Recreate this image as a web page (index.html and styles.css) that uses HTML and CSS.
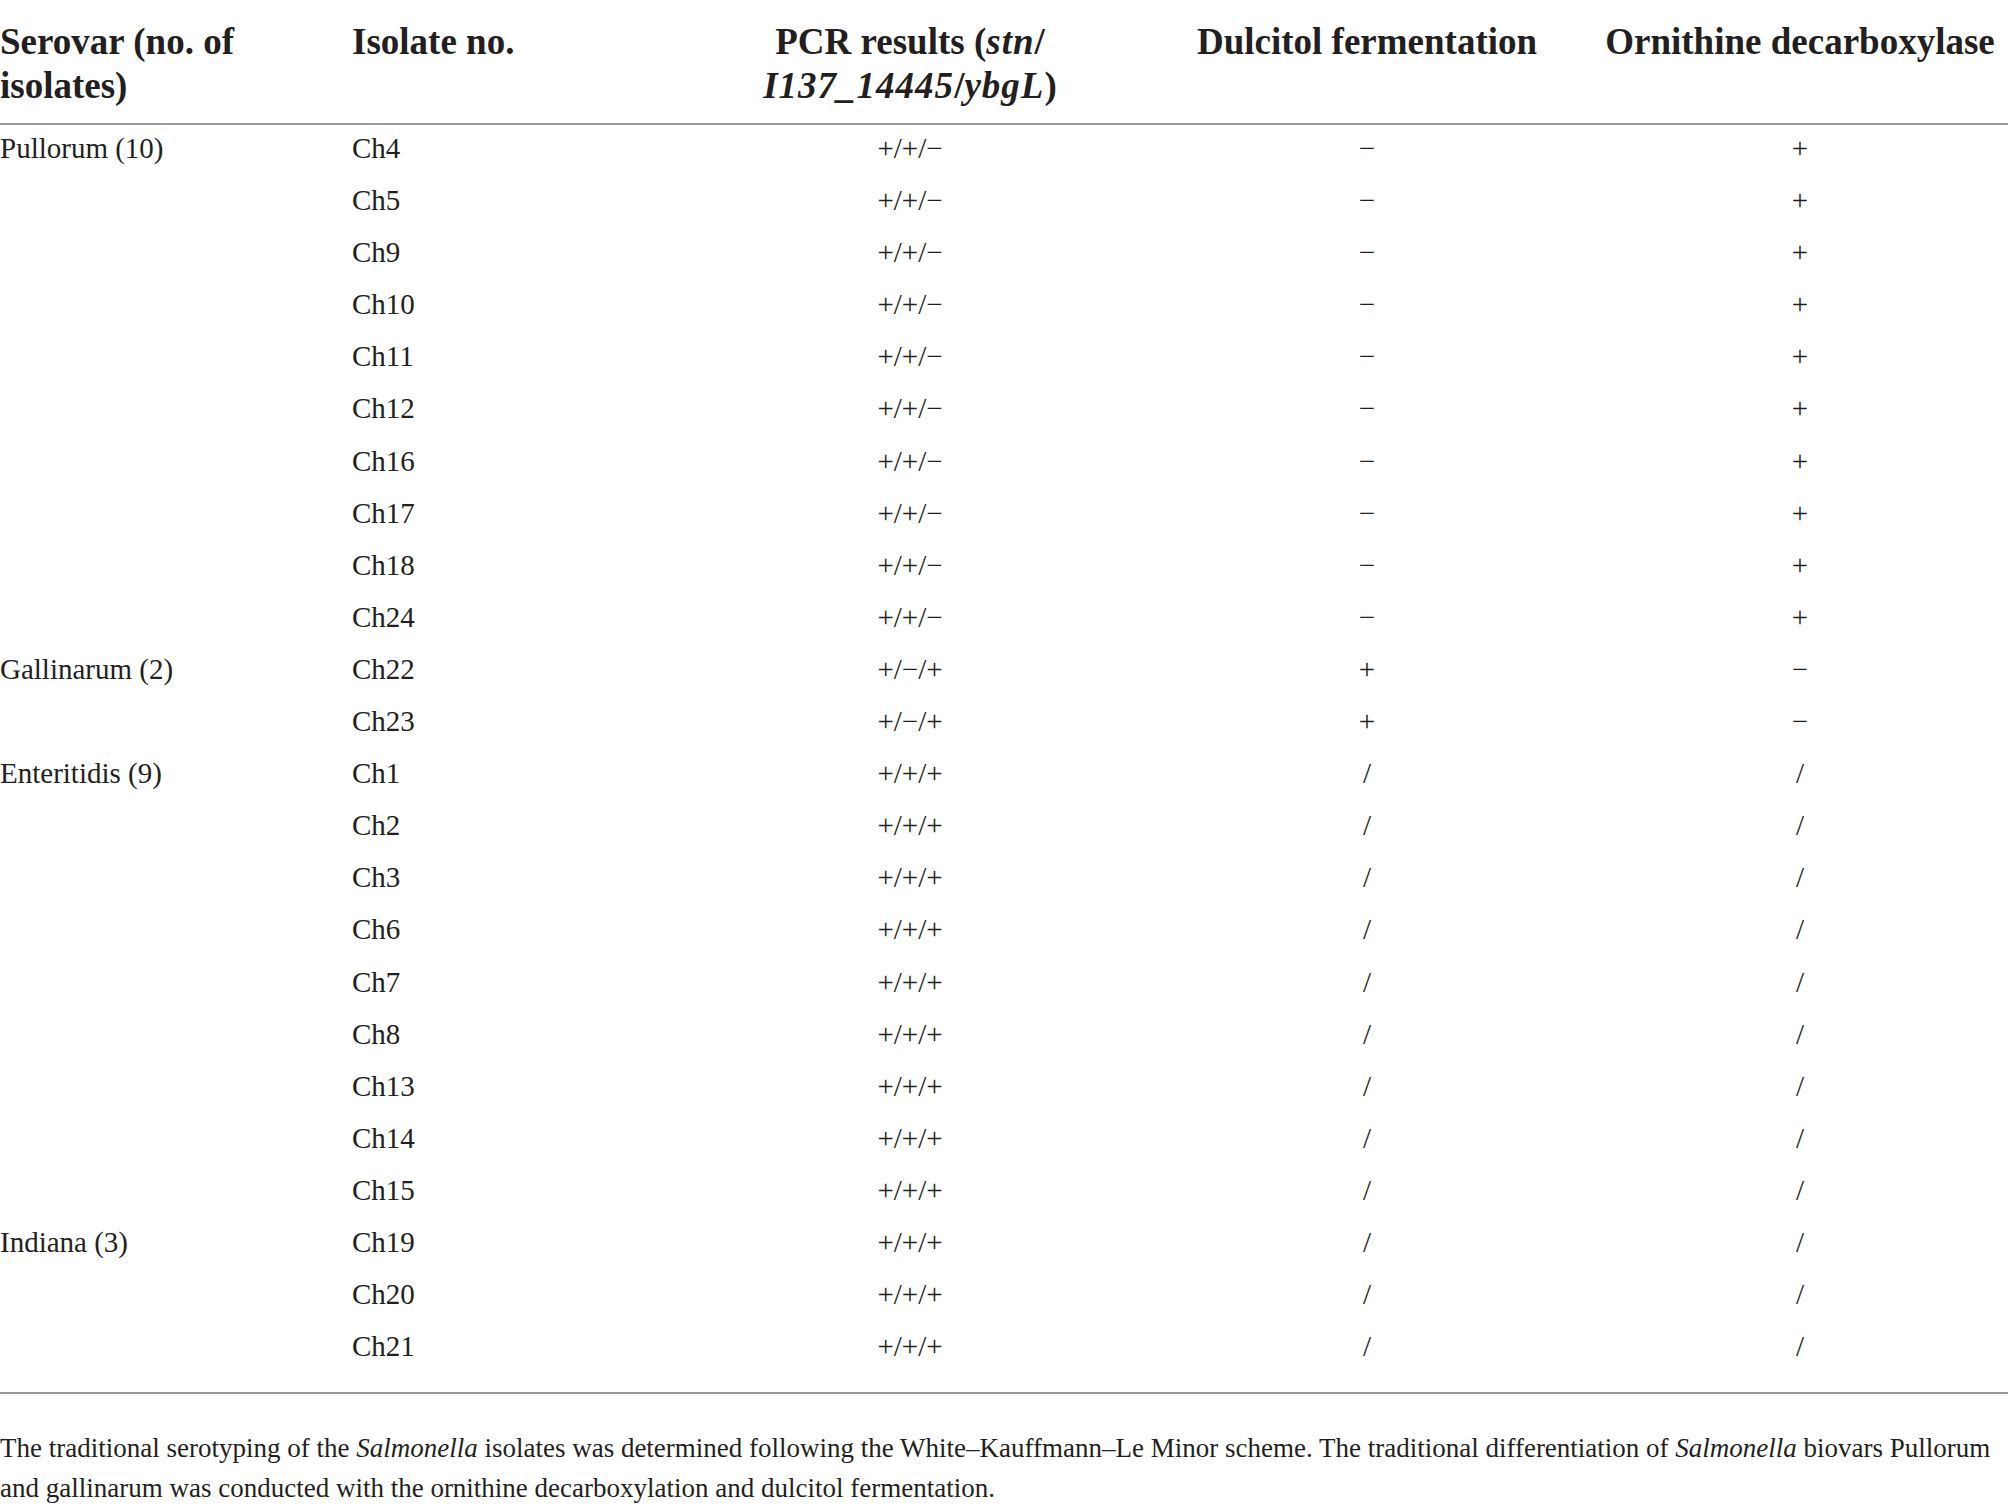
FILE: index.html
```html
<!DOCTYPE html>
<html lang="en">
<head>
<meta charset="utf-8">
<title>Salmonella isolates</title>
<link rel="stylesheet" href="styles.css">
</head>
<body>
<div class="page">
<table class="data">
  <colgroup>
    <col class="c1"><col class="c2"><col class="c3"><col class="c4"><col class="c5">
  </colgroup>
  <thead>
    <tr>
      <th class="left">Serovar (no. of<br>isolates)</th>
      <th class="left">Isolate no.</th>
      <th>PCR results (<i class="it">stn</i>/<br><i class="it">I137_14445</i>/<i class="it">ybgL</i>)</th>
      <th>Dulcitol fermentation</th>
      <th>Ornithine decarboxylase</th>
    </tr>
  </thead>
  <tbody>
    <tr class="first"><td class="left">Pullorum (10)</td><td class="left">Ch4</td><td>+/+/−</td><td>−</td><td>+</td></tr>
    <tr><td class="left"></td><td class="left">Ch5</td><td>+/+/−</td><td>−</td><td>+</td></tr>
    <tr><td class="left"></td><td class="left">Ch9</td><td>+/+/−</td><td>−</td><td>+</td></tr>
    <tr><td class="left"></td><td class="left">Ch10</td><td>+/+/−</td><td>−</td><td>+</td></tr>
    <tr><td class="left"></td><td class="left">Ch11</td><td>+/+/−</td><td>−</td><td>+</td></tr>
    <tr><td class="left"></td><td class="left">Ch12</td><td>+/+/−</td><td>−</td><td>+</td></tr>
    <tr><td class="left"></td><td class="left">Ch16</td><td>+/+/−</td><td>−</td><td>+</td></tr>
    <tr><td class="left"></td><td class="left">Ch17</td><td>+/+/−</td><td>−</td><td>+</td></tr>
    <tr><td class="left"></td><td class="left">Ch18</td><td>+/+/−</td><td>−</td><td>+</td></tr>
    <tr><td class="left"></td><td class="left">Ch24</td><td>+/+/−</td><td>−</td><td>+</td></tr>
    <tr><td class="left">Gallinarum (2)</td><td class="left">Ch22</td><td>+/−/+</td><td>+</td><td>−</td></tr>
    <tr><td class="left"></td><td class="left">Ch23</td><td>+/−/+</td><td>+</td><td>−</td></tr>
    <tr><td class="left">Enteritidis (9)</td><td class="left">Ch1</td><td>+/+/+</td><td>/</td><td>/</td></tr>
    <tr><td class="left"></td><td class="left">Ch2</td><td>+/+/+</td><td>/</td><td>/</td></tr>
    <tr><td class="left"></td><td class="left">Ch3</td><td>+/+/+</td><td>/</td><td>/</td></tr>
    <tr><td class="left"></td><td class="left">Ch6</td><td>+/+/+</td><td>/</td><td>/</td></tr>
    <tr><td class="left"></td><td class="left">Ch7</td><td>+/+/+</td><td>/</td><td>/</td></tr>
    <tr><td class="left"></td><td class="left">Ch8</td><td>+/+/+</td><td>/</td><td>/</td></tr>
    <tr><td class="left"></td><td class="left">Ch13</td><td>+/+/+</td><td>/</td><td>/</td></tr>
    <tr><td class="left"></td><td class="left">Ch14</td><td>+/+/+</td><td>/</td><td>/</td></tr>
    <tr><td class="left"></td><td class="left">Ch15</td><td>+/+/+</td><td>/</td><td>/</td></tr>
    <tr><td class="left">Indiana (3)</td><td class="left">Ch19</td><td>+/+/+</td><td>/</td><td>/</td></tr>
    <tr><td class="left"></td><td class="left">Ch20</td><td>+/+/+</td><td>/</td><td>/</td></tr>
    <tr class="last"><td class="left"></td><td class="left">Ch21</td><td>+/+/+</td><td>/</td><td>/</td></tr>
  </tbody>
</table>
<p class="note">The traditional serotyping of the <i>Salmonella</i> isolates was determined following the White–Kauffmann–Le Minor scheme. The traditional differentiation of <i>Salmonella</i> biovars Pullorum and gallinarum was conducted with the ornithine decarboxylation and dulcitol fermentation.</p>
</div>
</body>
</html>
```

FILE: styles.css
```css
html, body {
  margin: 0;
  padding: 0;
  background: #ffffff;
}

.page {
  width: 2008px;
  color: #231f20;
  font-family: "Liberation Serif", "Times New Roman", serif;
}

.data {
  width: 2008px;
  border-collapse: collapse;
  table-layout: fixed;
}

.c1 { width: 352px; }
.c2 { width: 326px; }
.c3 { width: 464px; }
.c4 { width: 450px; }
.c5 { width: 416px; }

.data th {
  font-size: 37px;
  font-weight: bold;
  line-height: 44px;
  padding: 20px 0 15px 0;
  text-align: center;
  vertical-align: top;
  border-bottom: 2px solid #9a9a9a;
  white-space: nowrap;
}

.data th .it {
  letter-spacing: 1px;
}

.data td {
  font-size: 29px;
  line-height: 46.1px;
  padding: 0 0 6px 0;
  text-align: center;
  vertical-align: top;
  white-space: nowrap;
}

.data tr.first td {
  padding-top: 0;
  padding-bottom: 6px;
}

.data .left {
  text-align: left;
}

.data tr.last td {
  padding-bottom: 23px;
  border-bottom: 2px solid #9a9a9a;
}

.note {
  margin: 34px 0 0 0;
  font-size: 27px;
  line-height: 40px;
}
```
